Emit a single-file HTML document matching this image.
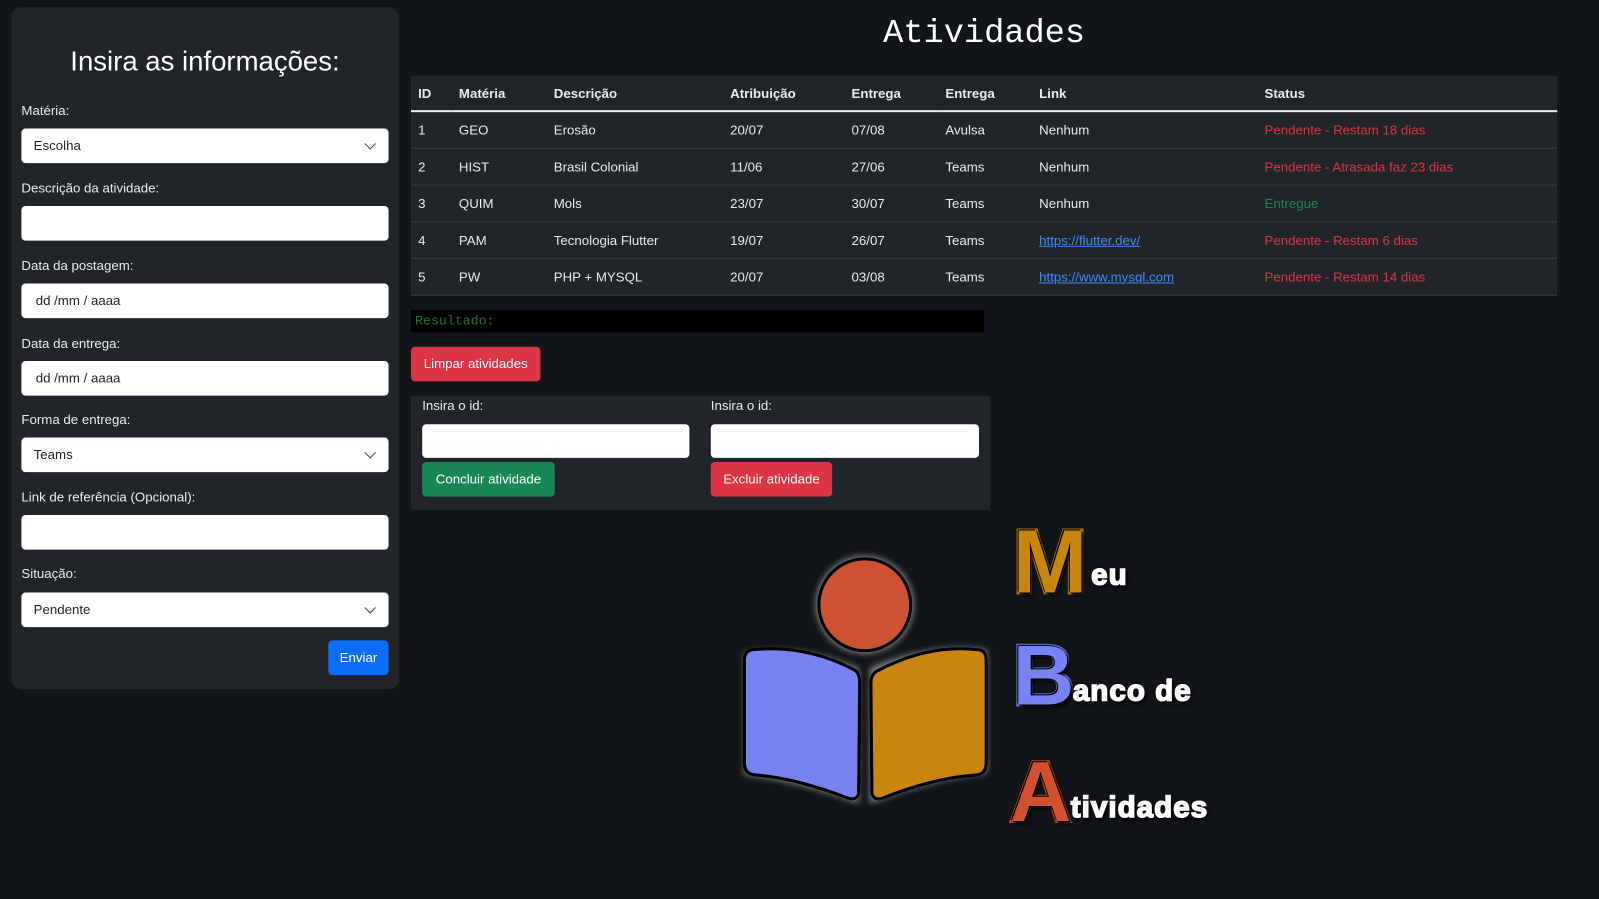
<!DOCTYPE html>
<html><head><meta charset="utf-8"><style>
*{box-sizing:border-box;margin:0;padding:0}
body{width:1599px;height:899px;background:#111418;font-family:"Liberation Sans",sans-serif;color:#dee2e6;position:relative;overflow:hidden;font-size:14px}
#w{position:absolute;left:0;top:0;width:1568px;height:882px;transform:scale(1.0198);transform-origin:0 0}
.a{position:absolute}
.panel{left:11px;top:7px;width:380px;height:669px;background:#212529;border-radius:10px}
.lbl{left:21px;font-size:13px;color:#e9ecef}
.inp{left:21px;width:360px;height:34px;background:#fff;border-radius:4px;color:#212529;font-size:13px;padding:9px 12px}
.chev{position:absolute;right:14px;top:11px;width:8px;height:8px;border-right:1.6px solid #343a40;border-bottom:1.6px solid #343a40;transform:rotate(45deg)}
.btn{color:#fff;font-size:13px;border-radius:4px;text-align:center;line-height:34px;height:34px}
table{border-collapse:collapse;position:absolute;left:403px;top:74px;width:1124px;background:#212529;font-size:13px}
td,th{text-align:left;padding:0 7px;height:36px;border-bottom:1px solid #373b3e;color:#e9ecef;white-space:nowrap}
th{height:35px;border-bottom:2px solid #e9ecef;font-weight:bold}
.r{color:#dc3545}.g{color:#198754}
a{color:#3d8bfd;text-decoration:underline}
.big{font-family:"Liberation Sans",sans-serif;font-weight:900;position:absolute;text-shadow:0 0 3px #000,1px 1px 0 #000,-1px -1px 0 #000,2px 3px 3px #000}
.L{-webkit-text-stroke:4px currentColor;paint-order:stroke fill}
.s{-webkit-text-stroke:1.5px #fff;letter-spacing:1px}
</style></head><body><div id="w">
<div class="a panel"></div>
<div class="a" style="left:11px;width:380px;top:45px;text-align:center;font-size:27px;color:#fff;font-weight:normal">Insira as informações:</div>
<div class="a lbl" style="top:101px">Matéria:</div>
<div class="a inp" style="top:126px">Escolha<span class="chev"></span></div>
<div class="a lbl" style="top:177px">Descrição da atividade:</div>
<div class="a inp" style="top:202px"></div>
<div class="a lbl" style="top:253px">Data da postagem:</div>
<div class="a inp" style="top:278px;padding-left:14px">dd /mm / aaaa</div>
<div class="a lbl" style="top:329px">Data da entrega:</div>
<div class="a inp" style="top:354px;padding-left:14px">dd /mm / aaaa</div>
<div class="a lbl" style="top:404px">Forma de entrega:</div>
<div class="a inp" style="top:429px">Teams<span class="chev"></span></div>
<div class="a lbl" style="top:480px">Link de referência (Opcional):</div>
<div class="a inp" style="top:505px"></div>
<div class="a lbl" style="top:555px">Situação:</div>
<div class="a inp" style="top:581px">Pendente<span class="chev"></span></div>
<div class="a btn" style="left:322px;top:628px;width:59px;background:#0d6efd">Enviar</div>

<div class="a" style="left:403px;width:1124px;top:14px;text-align:center;font-family:'Liberation Mono',monospace;font-size:33px;color:#fff">Atividades</div>
<table>
<tr><th style="width:40px">ID</th><th style="width:93px">Matéria</th><th style="width:173px">Descrição</th><th style="width:119px">Atribuição</th><th style="width:92px">Entrega</th><th style="width:92px">Entrega</th><th style="width:221px">Link</th><th>Status</th></tr>
<tr><td>1</td><td>GEO</td><td>Erosão</td><td>20/07</td><td>07/08</td><td>Avulsa</td><td>Nenhum</td><td class="r">Pendente - Restam 18 dias</td></tr>
<tr><td>2</td><td>HIST</td><td>Brasil Colonial</td><td>11/06</td><td>27/06</td><td>Teams</td><td>Nenhum</td><td class="r">Pendente - Atrasada faz 23 dias</td></tr>
<tr><td>3</td><td>QUIM</td><td>Mols</td><td>23/07</td><td>30/07</td><td>Teams</td><td>Nenhum</td><td class="g">Entregue</td></tr>
<tr><td>4</td><td>PAM</td><td>Tecnologia Flutter</td><td>19/07</td><td>26/07</td><td>Teams</td><td><a>https://flutter.dev/</a></td><td class="r">Pendente - Restam 6 dias</td></tr>
<tr><td>5</td><td>PW</td><td>PHP + MYSQL</td><td>20/07</td><td>03/08</td><td>Teams</td><td><a>https://www.mysql.com</a></td><td class="r">Pendente - Restam 14 dias</td></tr>
</table>
<div class="a" style="left:403px;top:304px;width:562px;height:22px;background:#000;color:#1d7a2a;font-family:'Liberation Mono',monospace;font-size:13px;padding:3px 4px">Resultado:</div>
<div class="a btn" style="left:403px;top:340px;width:127px;background:#dc3545">Limpar atividades</div>
<div class="a" style="left:403px;top:388px;width:568px;height:112px;background:#212529"></div>
<div class="a lbl" style="left:414px;top:390px">Insira o id:</div>
<div class="a lbl" style="left:697px;top:390px">Insira o id:</div>
<div class="a inp" style="left:414px;top:416px;width:262px;height:33px"></div>
<div class="a inp" style="left:697px;top:416px;width:263px;height:33px"></div>
<div class="a btn" style="left:414px;top:453px;width:130px;background:#198754">Concluir atividade</div>
<div class="a btn" style="left:697px;top:453px;width:119px;background:#dc3545">Excluir atividade</div>

<svg class="a" style="left:700px;top:520px" width="300" height="290">
<defs><filter id="gl"><feGaussianBlur stdDeviation="3"/></filter></defs>
<g filter="url(#gl)" opacity=".6"><circle cx="148" cy="73" r="48" fill="#ccc"/><path d="M30 120 Q80 110 142 135 L142 268 Q80 245 30 240Z" fill="#ccc"/><path d="M153 135 Q210 110 268 117 L268 238 Q210 245 153 268Z" fill="#ccc"/></g>
<circle cx="148" cy="73" r="45" fill="#cd5233" stroke="#000" stroke-width="3"/>
<path d="M40 117 Q90 112 138 137 Q143 140 143 150 L142 258 Q140 266 130 262 Q80 243 42 240 Q30 240 30 228 L30 127 Q30 117 40 117Z" fill="#7683f0" stroke="#000" stroke-width="3"/>
<path d="M258 117 Q210 112 162 137 Q154 140 154 150 L155 258 Q157 266 167 262 Q215 243 256 240 Q267 240 267 228 L267 127 Q267 117 258 117Z" fill="#c8860f" stroke="#000" stroke-width="3"/>
</svg>
<div class="big L" style="left:993px;top:500px;font-size:88px;color:#c8860f;letter-spacing:-4px">M</div>
<div class="big s" style="left:1070px;top:548px;font-size:29px;color:#fff">eu</div>
<div class="big L" style="left:993px;top:614px;font-size:84px;color:#7683f0">B</div>
<div class="big s" style="left:1052px;top:662px;font-size:29px;color:#fff">anco de</div>
<div class="big L" style="left:990px;top:728px;font-size:84px;color:#d0502f">A</div>
<div class="big s" style="left:1050px;top:776px;font-size:29px;color:#fff">tividades</div>
</div></body></html>
